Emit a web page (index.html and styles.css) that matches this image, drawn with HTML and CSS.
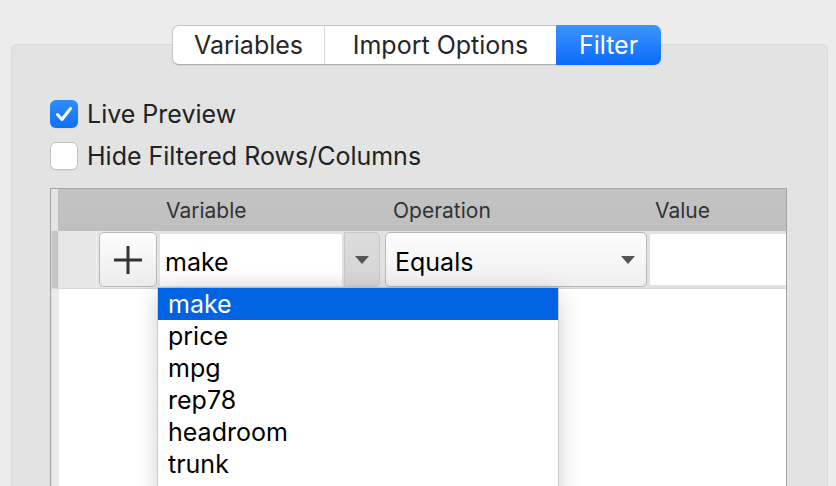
FILE: index.html
```html
<!DOCTYPE html>
<html lang="en">
<head>
    <meta charset="UTF-8">
    <title>Filter</title>
    <link rel="stylesheet" href="styles.css">
</head>
<body>
    <div class="window">
        <div class="tabs">
            <div class="segmented">
                <span class="seg seg-vars">Variables</span>
                <span class="seg seg-import">Import Options</span>
                <span class="seg seg-filter active">Filter</span>
            </div>
        </div>
        <div class="panel">
            <label class="check">
                <span class="box checked">
                    <svg width="28" height="28" viewBox="0 0 28 28"><path d="M7.5 14.5 L12 19.5 L20.5 8.5" fill="none" stroke="#fff" stroke-width="3" stroke-linecap="round" stroke-linejoin="round"/></svg>
                </span>
                Live Preview
            </label>
            <label class="check second">
                <span class="box"></span>
                Hide Filtered Rows/Columns
            </label>
            <div class="table">
                <div class="thead">
                    <div class="corner"></div>
                    <div class="hcells">
                        <span class="h-var">Variable</span>
                        <span class="h-op">Operation</span>
                        <span class="h-val">Value</span>
                    </div>
                </div>
                <div class="row">
                    <div class="row-head"></div>
                    <div class="cell-add">
                        <div class="add-btn">
                            <svg width="30" height="30" viewBox="0 0 30 30"><path d="M15 1 V29 M1 15 H29" stroke="#333" stroke-width="3"/></svg>
                        </div>
                    </div>
                    <div class="var-combo">
                        <span class="edit">make</span>
                        <span class="arrow-btn">
                            <svg width="14" height="8" viewBox="0 0 14 8"><path d="M0 0 H14 L7 8 Z" fill="#555"/></svg>
                        </span>
                    </div>
                    <div class="op-select">
                        <span>Equals</span>
                        <svg width="14" height="8" viewBox="0 0 14 8"><path d="M0 0 H14 L7 8 Z" fill="#555"/></svg>
                    </div>
                    <div class="value-cell"></div>
                </div>
                <div class="tbody">
                    <div class="row-head-col"></div>
                    <div class="grid-area"></div>
                </div>
            </div>
        </div>
    </div>
    <ul class="dropdown">
        <li class="active">make</li>
        <li>price</li>
        <li>mpg</li>
        <li>rep78</li>
        <li>headroom</li>
        <li>trunk</li>
        <li>weight</li>
    </ul>
</body>
</html>
```

FILE: styles.css
```css
body {
    margin: 0;
    height: 486px;
    overflow: hidden;
    background-color: #ececec;
    font-family: Inter, "Liberation Sans", sans-serif;
    font-size: 25px;
    color: #222;
    position: relative;
}
.window {
    padding: 25px 8px 0 11px;
}
.tabs {
    display: flex;
    padding-left: 161px;
    height: 40px;
    margin-bottom: -21px;
    position: relative;
    z-index: 1;
}
.segmented {
    display: flex;
    background: #fff;
    border: 1px solid #c6c6c6;
    border-bottom-color: #b0b0b0;
    border-radius: 7px;
    box-shadow: 0 1px 1px rgba(0, 0, 0, 0.06);
}
.seg {
    display: flex;
    align-items: center;
    justify-content: center;
    height: 38px;
    color: #262626;
}
.seg-vars {
    width: 151px;
    border-right: 1px solid #d8d8d8;
}
.seg-import {
    width: 231px;
}
.seg-filter {
    width: 105px;
}
.seg.active {
    margin: -1px -1px -1px 0;
    height: 40px;
    color: #fff;
    background: linear-gradient(#3d94fd, #0a6bfb);
    border-radius: 0 7px 7px 0;
}
.panel {
    height: 460px;
    background-color: #e3e3e3;
    border: 1px solid #dadada;
    border-radius: 6px;
    padding: 55px 40px 0 38px;
    box-sizing: border-box;
}
.check {
    display: flex;
    align-items: center;
    gap: 9px;
    height: 28px;
    color: #222;
}
.check.second {
    margin-top: 14px;
}
.box {
    width: 28px;
    height: 28px;
    box-sizing: border-box;
    border-radius: 6px;
    background: #fff;
    border: 1px solid #c2c2c2;
    box-shadow: 0 1px 1px rgba(0, 0, 0, 0.05);
}
.box.checked {
    border: none;
    background: linear-gradient(#2f8cfc, #0f72f6);
}
.box svg {
    display: block;
}
.table {
    margin-top: 18px;
    width: 737px;
    height: 300px;
    box-sizing: border-box;
    border: 1px solid #a4a4a4;
    border-bottom: none;
    background: #fff;
}
.thead {
    display: flex;
    height: 42px;
}
.corner {
    width: 7px;
    background: #e4e4e4;
}
.hcells {
    flex: 1;
    display: flex;
    align-items: center;
    padding-left: 108px;
    background: linear-gradient(#c3c3c3, #bfbfbf);
    font-size: 21px;
    color: #333;
}
.h-var {
    width: 227px;
}
.h-op {
    width: 262px;
}
.row {
    display: flex;
    height: 58px;
    background: #e2e2e2;
    border-bottom: 1px solid #d6d6d6;
    box-sizing: border-box;
}
.row-head {
    width: 7px;
    background: #c5c5c5;
    border-left: 1px solid #d8d8d8;
    box-sizing: border-box;
}
.cell-add {
    width: 100px;
    display: flex;
    padding-left: 41px;
    box-sizing: border-box;
    background: linear-gradient(90deg, #e6e6e6 38px, #f0f0f0 38px, #f0f0f0 39px, #e6e6e6 39px);
}
.add-btn {
    width: 58px;
    height: 55px;
    margin-top: 1px;
    box-sizing: border-box;
    border: 1px solid #b8b8b8;
    border-radius: 5px;
    background: linear-gradient(#fdfdfd, #ececec);
    display: flex;
    align-items: center;
    justify-content: center;
}
.var-combo {
    width: 225px;
    display: flex;
}
.edit {
    margin: 3px 0 0 2px;
    width: 182px;
    height: 52px;
    padding: 3px 0 0 5px;
    box-sizing: border-box;
    background: linear-gradient(#fff 70%, #f4f4f4);
    display: flex;
    align-items: center;
    color: #000;
}
.arrow-btn {
    margin: 1px 0 0 2px;
    width: 36px;
    height: 55px;
    box-sizing: border-box;
    border: 1px solid #c8c8c8;
    border-radius: 0 5px 5px 0;
    background: linear-gradient(#dcdcdc, #d4d4d4);
    display: flex;
    align-items: center;
    justify-content: center;
}
.op-select {
    margin: 1px 0 0 2px;
    width: 262px;
    height: 55px;
    box-sizing: border-box;
    border: 1px solid #b6b6b6;
    border-radius: 5px;
    background: linear-gradient(#fdfdfd, #efefef);
    display: flex;
    align-items: center;
    justify-content: space-between;
    padding: 0 11px 0 9px;
    color: #000;
}
.op-select span {
    padding-top: 4px;
}
.value-cell {
    margin: 3px 0 0 3px;
    flex: 1;
    height: 51px;
    background: #fff;
}
.tbody {
    display: flex;
    height: 200px;
}
.row-head-col {
    width: 8px;
    background: #eaeaea;
    border-left: 1px solid #dcdcdc;
    box-sizing: border-box;
}
.grid-area {
    flex: 1;
    background: #fff;
}
.dropdown {
    position: absolute;
    left: 158px;
    top: 288px;
    width: 400px;
    margin: 0;
    padding: 0;
    list-style: none;
    background: #fff;
    box-shadow: 0 0 0 1px rgba(0, 0, 0, 0.12), 0 6px 22px rgba(0, 0, 0, 0.2);
    color: #000;
}
.dropdown li {
    height: 32px;
    line-height: 32px;
    padding-left: 10px;
}
.dropdown li.active {
    background: #0063e1;
    color: #fff;
}
```
